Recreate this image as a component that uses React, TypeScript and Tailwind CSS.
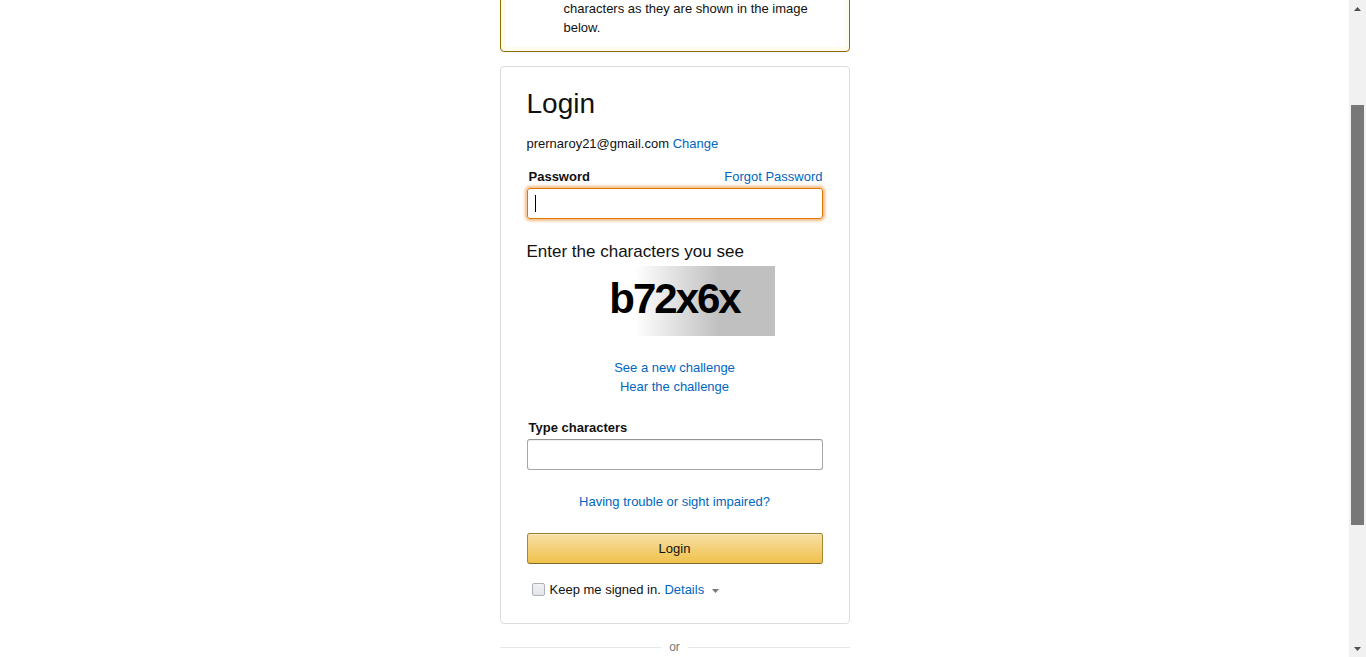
import React from "react";

function AlertIcon() {
  return (
    <svg width="27" height="27" viewBox="0 0 27 27" aria-hidden="true">
      <path d="M13.5 2 L26 24 H1 Z" fill="#f0c14b" stroke="#8c6e00" strokeWidth="1.5" strokeLinejoin="round" />
      <rect x="12.3" y="9" width="2.4" height="9" rx="1" fill="#111" />
      <circle cx="13.5" cy="20.8" r="1.4" fill="#111" />
    </svg>
  );
}

function Caret() {
  return (
    <svg width="7" height="4" viewBox="0 0 7 4" className="ml-[8px] inline-block align-middle" aria-hidden="true">
      <path d="M0 0 H7 L3.5 4 Z" fill="#777" />
    </svg>
  );
}

function Scrollbar() {
  // fake browser scrollbar, page is scrolled ~138px
  return (
    <div className="flex w-[17px] shrink-0 flex-col bg-[#f1f1f1]">
      <div className="flex h-[17px] items-center justify-center">
        <svg width="7" height="4" viewBox="0 0 7 4">
          <path d="M0 4 H7 L3.5 0 Z" fill="#505050" />
        </svg>
      </div>
      <div className="flex-1">
        <div className="mx-[2px] mt-[88px] h-[420px] bg-[#787878]" />
      </div>
      <div className="flex h-[17px] items-center justify-center">
        <svg width="7" height="4" viewBox="0 0 7 4">
          <path d="M0 0 H7 L3.5 4 Z" fill="#505050" />
        </svg>
      </div>
    </div>
  );
}

export default function App() {
  return (
    <div className="flex h-[657px] overflow-hidden bg-white font-['Liberation_Sans',Arial,sans-serif] text-[13px] leading-[19px] text-[#111]">
      <div className="flex-1 overflow-hidden">
        <div className="-mt-[138px] flex flex-col items-center">
          {/* Logo */}
          <div className="flex h-[63px] items-center justify-center">
            <span className="text-[28px] font-bold tracking-tight text-[#111]">
              amazon<span className="text-[16px] font-normal">.in</span>
            </span>
          </div>

          <div className="w-[350px]">
            {/* Warning alert */}
            <div className="flex rounded-[4px] border border-[#8c6e00] py-[14px] pl-[18px] pr-[18px] shadow-[inset_0_0_0_4px_#fffbea]">
              <div className="mr-[18px] w-[27px] shrink-0 pt-[1px]">
                <AlertIcon />
              </div>
              <div>
                <h4 className="text-[17px] leading-[1.255] text-[#8c6e00]">Important Message!</h4>
                <p>
                  To better protect your account, please re-
                  <br />
                  enter your password and then enter the
                  <br />
                  characters as they are shown in the image
                  <br />
                  below.
                </p>
              </div>
            </div>

            {/* Login box */}
            <div className="mt-[14px] rounded-[4px] border border-[#ddd] px-[26px] pb-[24px] pt-[20px]">
              <h1 className="mb-[13px] text-[28px] font-normal leading-[1.2]">Login</h1>
              <div>
                prernaroy21@gmail.com <a className="text-[#0066c0]">Change</a>
              </div>

              <div className="mt-[14px]">
                <div className="mb-[2px] flex justify-between pl-[2px]">
                  <label className="font-bold">Password</label>
                  <a className="text-[#0066c0]">Forgot Password</a>
                </div>
                <div className="flex h-[31px] items-center rounded-[3px] border border-[#e77600] px-[7px] shadow-[0_0_3px_2px_rgba(228,121,17,0.5)]">
                  <span className="h-[17px] w-px bg-black" />
                </div>
              </div>

              <h4 className="mt-[22px] text-[17px] font-normal leading-[1.255]">Enter the characters you see</h4>
              <div className="mx-auto mt-[4px] flex h-[70px] w-[200px] items-center justify-center bg-[linear-gradient(to_right,#fff_30%,#c0c0c0_72%)]">
                <span className="pb-[4px] text-[42px] font-bold leading-none tracking-[-2px] text-black">b72x6x</span>
              </div>

              <div className="mt-[22px] flex flex-col items-center text-[#0066c0]">
                <a>See a new challenge</a>
                <a>Hear the challenge</a>
              </div>

              <div className="mt-[22px]">
                <label className="mb-[2px] block pl-[2px] font-bold">Type characters</label>
                <div className="h-[31px] rounded-[3px] border border-[#a6a6a6] border-t-[#949494] shadow-[inset_0_1px_0_rgba(0,0,0,0.07)]" />
              </div>

              <div className="mt-[22px] text-center">
                <a className="text-[#0066c0]">Having trouble or sight impaired?</a>
              </div>

              <button className="mt-[22px] flex h-[31px] w-full items-center justify-center rounded-[3px] border border-[#a88734] border-b-[#846a29] border-t-[#9c7e31] bg-[linear-gradient(to_bottom,#f7dfa5,#f0c14b)] text-[13px] text-[#111] shadow-[inset_0_1px_0_rgba(255,255,255,0.4)]">
                Login
              </button>

              <div className="mt-[16px] flex items-center pl-[5px]">
                <span className="mr-[5px] h-[13px] w-[13px] rounded-[2px] border border-[#adb1b8] bg-[linear-gradient(to_bottom,#f1f2f4,#e2e4e8)]" />
                <span>
                  Keep me signed in. <a className="text-[#0066c0]">Details</a>
                  <Caret />
                </span>
              </div>
            </div>

            {/* Divider */}
            <div className="mt-[16px] flex items-center">
              <div className="h-px flex-1 bg-[#e7e7e7]" />
              <span className="px-[8px] text-[12px] leading-[15px] text-[#767676]">or</span>
              <div className="h-px flex-1 bg-[#e7e7e7]" />
            </div>

            <div className="mt-[14px] flex h-[31px] items-center justify-center rounded-[3px] border border-[#adb1b8] bg-[linear-gradient(to_bottom,#f7f8fa,#e7e9ec)]">
              Create your Amazon account
            </div>
          </div>
        </div>
      </div>
      <Scrollbar />
    </div>
  );
}
